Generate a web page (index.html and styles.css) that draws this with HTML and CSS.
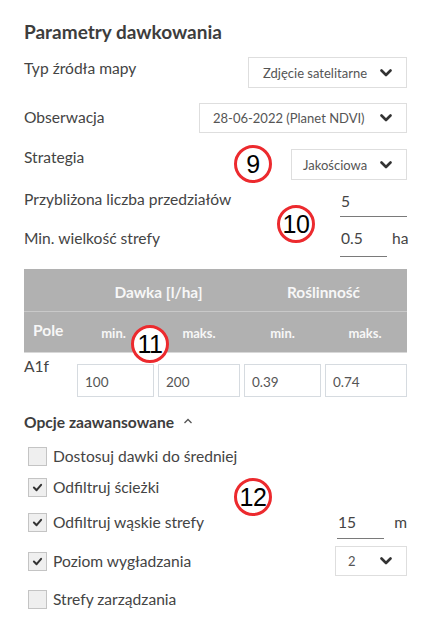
FILE: index.html
```html
<!DOCTYPE html>
<html lang="pl">
<head>
<meta charset="utf-8">
<title>Parametry dawkowania</title>
<link rel="stylesheet" href="styles.css">
</head>
<body>
<div class="panel">
  <h1 class="title">Parametry dawkowania</h1>

  <div class="row row-1">
    <span class="label">Typ źródła mapy</span>
    <div class="select sel-source"><span>Zdjęcie satelitarne</span><svg class="chev" viewBox="0 0 12 8"><path d="M1.5 1.5 L6 6 L10.5 1.5"/></svg></div>
  </div>

  <div class="row row-2">
    <span class="label">Obserwacja</span>
    <div class="select sel-obs"><span>28-06-2022 (Planet NDVI)</span><svg class="chev" viewBox="0 0 12 8"><path d="M1.5 1.5 L6 6 L10.5 1.5"/></svg></div>
  </div>

  <div class="row row-3">
    <span class="label">Strategia</span>
    <div class="select sel-strat"><span>Jakościowa</span><svg class="chev" viewBox="0 0 12 8"><path d="M1.5 1.5 L6 6 L10.5 1.5"/></svg></div>
  </div>

  <div class="row row-4">
    <span class="label">Przybliżona liczba przedziałów</span>
    <div class="field field-wide">5</div>
  </div>

  <div class="row row-5">
    <span class="label">Min. wielkość strefy</span>
    <div class="unit-group">
      <div class="field field-narrow">0.5</div>
      <span class="unit">ha</span>
    </div>
  </div>

  <div class="table">
    <div class="thead">
      <div class="th-top">
        <span></span>
        <span class="th-group">Dawka [l/ha]</span>
        <span class="th-group">Roślinność</span>
      </div>
      <div class="th-sub">
        <span class="th-pole">Pole</span>
        <span class="th-small">min.</span>
        <span class="th-small">maks.</span>
        <span class="th-small">min.</span>
        <span class="th-small">maks.</span>
      </div>
    </div>
    <div class="tbody">
      <span class="cell-name">A1f</span>
      <div class="cell"><div class="box-input">100</div></div>
      <div class="cell"><div class="box-input">200</div></div>
      <div class="cell"><div class="box-input">0.39</div></div>
      <div class="cell"><div class="box-input">0.74</div></div>
    </div>
  </div>

  <div class="advanced">
    <span>Opcje zaawansowane</span>
    <svg class="caret" viewBox="0 0 10 6"><path d="M1.5 5 L5 1.5 L8.5 5"/></svg>
  </div>

  <div class="check-row ck-1">
    <span class="checkbox"></span>
    <span class="check-label">Dostosuj dawki do średniej</span>
  </div>
  <div class="check-row ck-2">
    <span class="checkbox"><svg viewBox="0 0 12 10"><path d="M2 5 L5 8 L10 2"/></svg></span>
    <span class="check-label">Odfiltruj ścieżki</span>
  </div>
  <div class="check-row ck-3">
    <span class="checkbox"><svg viewBox="0 0 12 10"><path d="M2 5 L5 8 L10 2"/></svg></span>
    <span class="check-label">Odfiltruj wąskie strefy</span>
    <div class="unit-group push">
      <div class="field field-narrow field-15">15</div>
      <span class="unit unit-m">m</span>
    </div>
  </div>
  <div class="check-row ck-4">
    <span class="checkbox"><svg viewBox="0 0 12 10"><path d="M2 5 L5 8 L10 2"/></svg></span>
    <span class="check-label">Poziom wygładzania</span>
    <div class="select sel-level push"><span>2</span><svg class="chev" viewBox="0 0 12 8"><path d="M1.5 1.5 L6 6 L10.5 1.5"/></svg></div>
  </div>
  <div class="check-row ck-5">
    <span class="checkbox"></span>
    <span class="check-label">Strefy zarządzania</span>
  </div>

  <span class="badge b9">9</span>
  <span class="badge b10">10</span>
  <span class="badge b11">11</span>
  <span class="badge b12">12</span>
</div>
</body>
</html>
```

FILE: styles.css
```css
* { box-sizing: border-box; }

html, body {
  margin: 0;
  padding: 0;
  background: #ffffff;
}

body {
  font-family: Lato, "Open Sans", sans-serif;
  color: #444444;
}

.panel {
  position: relative;
  width: 434px;
  height: 630px;
  padding: 19px 27px 0 24px;
}

.title {
  margin: 0;
  font-size: 19px;
  line-height: 25px;
  font-weight: 700;
  color: #3d3d3d;
}

.row {
  display: flex;
  justify-content: space-between;
  align-items: flex-start;
}

.label {
  font-size: 15.6px;
  line-height: 20px;
  color: #444444;
}

.row-1 { margin-top: 13px; }
.row-1 .label { margin-top: 1px; }

.row-2 { margin-top: 15px; }
.row-2 .label { margin-top: 4px; }

.row-3 { margin-top: 14px; }
.row-3 .select { margin-top: 2px; }

.row-4 { margin-top: 9px; }
.row-5 { margin-top: 11px; }

.select {
  display: flex;
  align-items: center;
  justify-content: space-between;
  height: 31px;
  padding: 0 14px 0 13px;
  border: 1px solid #dedede;
  background: #ffffff;
  font-size: 13px;
  color: #555555;
}

.sel-source { width: 159px; padding-left: 14px; }
.sel-obs { width: 208px; height: 30px; }
.sel-strat { width: 116px; padding-left: 11px; }
.sel-level { width: 72px; height: 30px; padding-left: 12px; }

.chev {
  width: 12px;
  height: 8px;
  flex: none;
}
.chev path {
  fill: none;
  stroke: #333333;
  stroke-width: 2.6;
  stroke-linecap: round;
  stroke-linejoin: round;
}

.field {
  font-size: 15.6px;
  line-height: 20px;
  color: #444444;
  padding: 2px 0 5px 1px;
  border-bottom: 1px solid #7a7a7a;
}

.field-wide { width: 67px; }
.field-narrow { width: 47px; padding: 0 0 8px 1px; }

.unit-group {
  display: flex;
  align-items: flex-start;
  gap: 5px;
}

.unit {
  font-size: 15.6px;
  line-height: 20px;
  width: 15px;
  text-align: right;
}

/* table */
.table {
  margin-top: 12px;
}

.thead {
  background: #b1b1b1;
  color: #f7f7f7;
  font-weight: 700;
}

.th-top,
.th-sub,
.tbody {
  display: grid;
  grid-template-columns: 51px 81px 86px 81px 84px;
}

.th-top {
  height: 43px;
  align-items: center;
  border-bottom: 1px solid #c9c9c9;
}

.th-group {
  grid-column: span 2;
  text-align: center;
  font-size: 15.4px;
  padding-top: 4px;
}
.th-top .th-group:last-child { padding-right: 2px; }

.th-sub {
  height: 41px;
  align-items: center;
  border-bottom: 1px solid #d8d8d8;
}

.th-pole {
  font-size: 15.6px;
  padding-left: 9px;
  padding-bottom: 4px;
}

.th-small {
  font-size: 13px;
  text-align: center;
  padding-top: 2px;
}
.th-small:nth-child(2) { padding-right: 4px; }

.tbody {
  align-items: flex-start;
}

.cell-name {
  font-size: 15.6px;
  line-height: 20px;
  margin-top: 3px;
}

.cell {
  padding: 11px 2px 0 2px;
}
.cell:last-child { padding-right: 0; }

.box-input {
  height: 33px;
  border: 1px solid #d6dbe0;
  padding: 0 7px;
  display: flex;
  align-items: center;
  font-size: 13.5px;
  color: #555555;
  padding-top: 2px;
}

/* advanced */
.advanced {
  display: flex;
  align-items: center;
  gap: 9px;
  margin-top: 15px;
  font-size: 15.6px;
  line-height: 20px;
  font-weight: 700;
  color: #3d3d3d;
}

.caret {
  width: 10px;
  height: 6px;
  margin-top: -3px;
}
.caret path {
  fill: none;
  stroke: #555555;
  stroke-width: 1.3;
}

.check-row {
  display: flex;
  align-items: center;
  padding-left: 4px;
}

.checkbox {
  width: 19px;
  height: 19px;
  flex: none;
  border: 1px solid #c4c4c4;
  background: #efefef;
  display: flex;
  align-items: center;
  justify-content: center;
  margin-right: 6px;
}
.checkbox svg {
  width: 11px;
  height: 9px;
}
.checkbox path {
  fill: none;
  stroke: #333333;
  stroke-width: 2.2;
  stroke-linecap: round;
  stroke-linejoin: round;
}

.check-label {
  font-size: 15.6px;
  line-height: 20px;
  color: #444444;
}

.push { margin-left: auto; }

.ck-1 { margin-top: 14px; }
.ck-2 { margin-top: 11px; }
.ck-3 { margin-top: 15px; align-items: flex-start; }
.ck-3 .checkbox { margin-top: 1px; }
.ck-3 .field-15 { padding-bottom: 6px; }
.unit-m { margin-left: 3px; }
.ck-4 { margin-top: 7px; }
.ck-5 { margin-top: 13px; }

/* annotation badges */
.badge {
  position: absolute;
  width: 38px;
  height: 38px;
  border: 3px solid #ec2a2e;
  border-radius: 50%;
  background: #ffffff;
  color: #000000;
  font-family: "Liberation Sans", Arial, sans-serif;
  font-size: 25px;
  line-height: 32px;
  text-align: center;
  letter-spacing: -0.5px;
}

.b9  { left: 234px; top: 145px; }
.b10 { left: 277px; top: 205px; }
.b11 { left: 131px; top: 325px; }
.b12 { left: 234px; top: 478px; }
```
